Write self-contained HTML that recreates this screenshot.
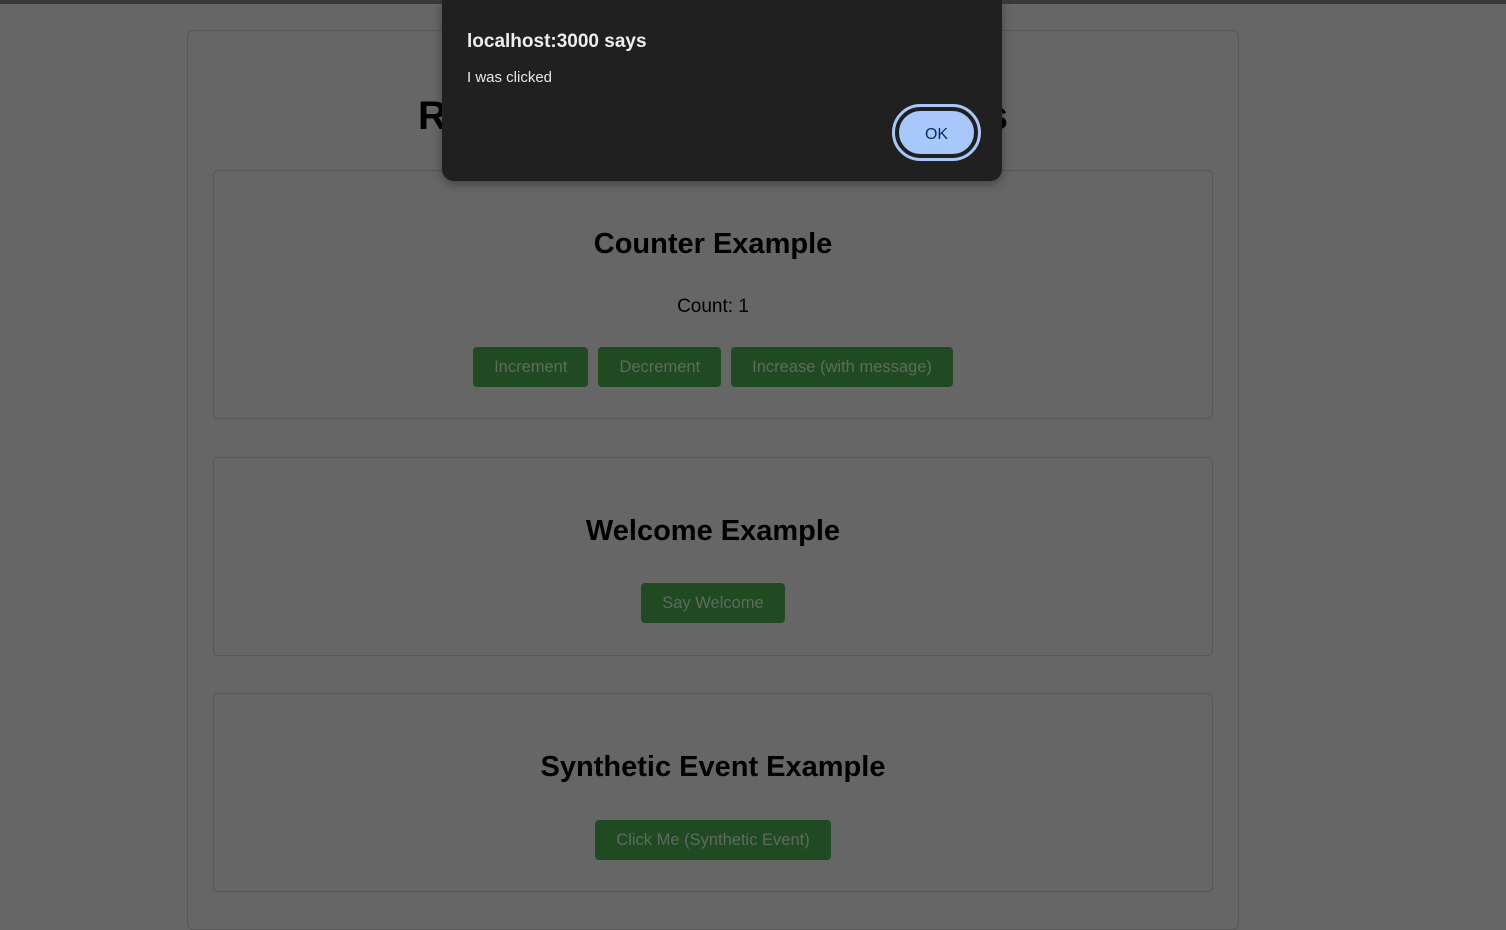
<!DOCTYPE html>
<html><head><meta charset="utf-8"><style>
*{box-sizing:border-box}
body{margin:0;width:1506px;height:914px;overflow:hidden;background:#666;font-family:"Liberation Sans",sans-serif;position:relative}
.top{position:absolute;left:0;top:0;width:1506px;height:4px;background:#3a3a3a}
.outer{position:absolute;left:187px;top:30px;width:1052px;height:900px;border:1px solid #575757;border-radius:6px}
.title{position:absolute;top:94px;font-size:40px;font-weight:bold;color:#000;white-space:nowrap}
.card{position:absolute;left:213px;width:1000px;border:1px solid #575757;border-radius:5px;text-align:center}
.card h2{margin:0;font-size:29px;font-weight:bold;color:#000;position:absolute;left:0;right:0}
.btn{display:inline-block;background:#1f4a22;color:#5f6b5f;font-size:16.5px;height:40px;line-height:40px;padding:0 21px;border-radius:4px;margin:0 5px}
.row{position:absolute;left:0;right:0}
.dlg{position:absolute;left:442px;top:0;width:560px;height:181px;background:#202020;border-radius:0 0 12px 12px;box-shadow:0 3px 10px rgba(0,0,0,.35);color:#e8e8e8}
.dlg .h{position:absolute;left:25px;top:31px;font-size:19px;font-weight:bold;color:#eee}
.dlg .m{position:absolute;left:25px;top:69px;font-size:15px}
.ok{position:absolute;left:892px;top:104px;width:89px;height:57px;border-radius:29px;border:3px solid #a8c7fa;padding:2px;}
.ok div{width:100%;height:100%;border-radius:26px;background:#a8c7fa;color:#062e6f;font-size:16px;text-align:center;line-height:47px;border:2px solid #202020}
</style></head><body>
<div class="top"></div>
<div class="outer"></div>
<div class="title" style="left:418px">React Event Handling</div>
<div class="title" style="right:498px">Examples</div>
<div class="card" style="top:170px;height:249px">
<h2 style="top:57px">Counter Example</h2>
<div class="row" style="top:125px;font-size:19px;color:#000">Count: 1</div>
<div class="row" style="top:176px"><span class="btn">Increment</span><span class="btn">Decrement</span><span class="btn">Increase (with message)</span></div>
</div>
<div class="card" style="top:457px;height:199px">
<h2 style="top:57px">Welcome Example</h2>
<div class="row" style="top:125px"><span class="btn">Say Welcome</span></div>
</div>
<div class="card" style="top:693px;height:199px">
<h2 style="top:57px">Synthetic Event Example</h2>
<div class="row" style="top:126px"><span class="btn">Click Me (Synthetic Event)</span></div>
</div>
<div class="dlg"><div class="h">localhost:3000 says</div><div class="m">I was clicked</div></div>
<div class="ok"><div>OK</div></div>
</body></html>
